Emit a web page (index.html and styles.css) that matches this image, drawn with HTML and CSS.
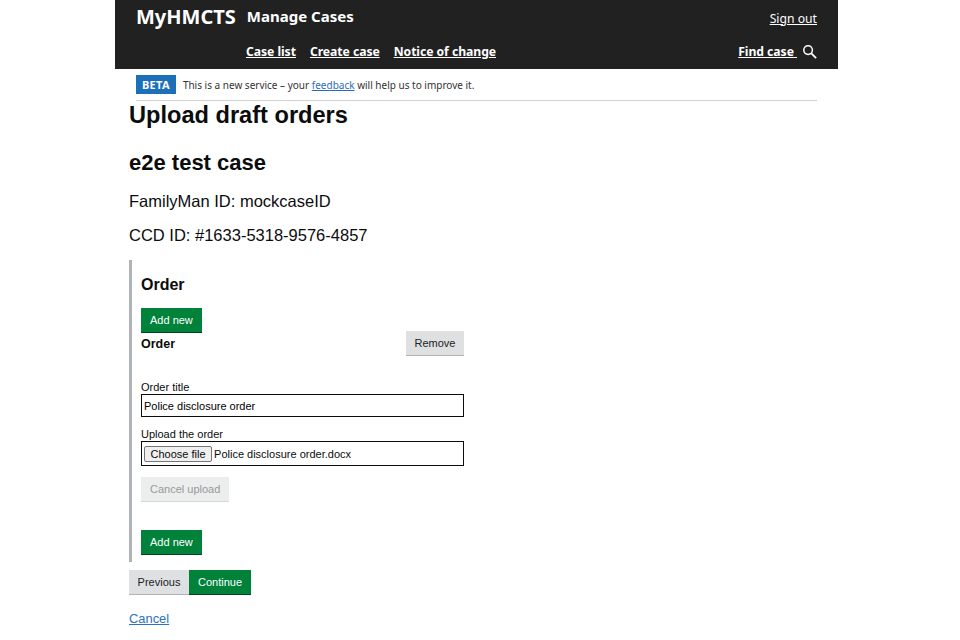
FILE: index.html
```html
<!DOCTYPE html>
<html lang="en">
<head>
  <meta charset="UTF-8" />
  <title>Upload draft orders</title>
  <link rel="stylesheet" href="styles.css">
</head>
<body>
  <div class="page">
    <header class="site-header">
      <div class="header-row">
        <div class="brand">
          <a class="logo">MyHMCTS</a>
          <span class="service-name">Manage Cases</span>
        </div>
        <a class="header-link" href="#">Sign out</a>
      </div>
      <div class="header-row nav-row">
        <nav class="main-nav">
          <a class="header-link" href="#">Case list</a>
          <a class="header-link" href="#">Create case</a>
          <a class="header-link" href="#">Notice of change</a>
        </nav>
        <div class="find-case">
          <a class="header-link" href="#">Find case&nbsp;</a>
          <svg class="search-icon" width="15" height="15" viewBox="0 0 16 16" fill="none" stroke="#fff">
            <circle cx="6.5" cy="6.5" r="4.6" stroke-width="1.6" />
            <path d="M10 10l5 5" stroke-width="2" />
          </svg>
        </div>
      </div>
    </header>

    <div class="phase-banner">
      <strong class="phase-tag">BETA</strong>
      <span>This is a new service – your <a href="#">feedback</a> will help us to improve it.</span>
    </div>

    <main class="content">
      <h1>Upload draft orders</h1>
      <h2>e2e test case</h2>
      <p class="case-ref">FamilyMan ID: mockcaseID</p>
      <p class="case-ref">CCD ID: #1633-5318-9576-4857</p>

      <section class="collection">
        <h3>Order</h3>
        <button class="btn btn-green">Add new</button>
        <div class="item-head">
          <h4>Order</h4>
          <button class="btn btn-grey">Remove</button>
        </div>
        <div class="form-group">
          <label for="orderTitle">Order title</label>
          <input type="text" id="orderTitle" value="Police disclosure order" />
        </div>
        <div class="form-group">
          <label>Upload the order</label>
          <div class="file-box">
            <span class="file-btn">Choose file</span>
            <span>Police disclosure order.docx</span>
          </div>
        </div>
        <button class="btn btn-disabled" disabled>Cancel upload</button>
        <button class="btn btn-green add-bottom">Add new</button>
      </section>

      <div class="form-actions">
        <button class="btn btn-grey">Previous</button>
        <button class="btn btn-green">Continue</button>
      </div>
      <a class="cancel" href="#">Cancel</a>
    </main>
  </div>
</body>
</html>
```
FILE: styles.css
```css
* {
  box-sizing: border-box;
  margin: 0;
  padding: 0;
}

html, body {
  height: 640px;
  overflow: hidden;
}

body {
  background-color: #fff;
  color: #0b0c0c;
  font-family: "Liberation Sans", Arial, sans-serif;
}

.page {
  width: 723px;
  margin-left: 115px;
}

.site-header {
  background-color: #212121;
  height: 69px;
  padding: 0 21px;
  color: #fff;
  font-family: "Noto Sans", sans-serif;
}

.header-row {
  display: flex;
  justify-content: space-between;
  align-items: center;
  height: 36px;
}

.nav-row {
  height: 29px;
  padding-left: 110px;
  padding-top: 2px;
}

.brand {
  display: flex;
  align-items: center;
  gap: 11px;
  padding-bottom: 4px;
}

.logo {
  font-size: 20px;
  font-weight: 700;
}

.service-name {
  font-size: 15px;
  font-weight: 700;
}

.header-link {
  color: #fff;
  font-size: 12.2px;
}

.main-nav {
  display: flex;
  gap: 14px;
}

.main-nav .header-link,
.find-case .header-link {
  font-weight: 700;
  letter-spacing: -0.05px;
}

.find-case {
  display: flex;
  align-items: center;
  gap: 5px;
}

.phase-banner {
  display: flex;
  align-items: center;
  gap: 7px;
  height: 32px;
  margin: 0 21px;
  border-bottom: 1px solid #d0d0d0;
  font-family: "Noto Sans", sans-serif;
  font-size: 10px;
  color: #333;
}

.phase-banner a {
  color: #2a6ebb;
}

.phase-tag {
  background-color: #1d70b8;
  color: #fff;
  font-size: 11px;
  letter-spacing: 0.3px;
  padding: 2px 6px;
}

.content {
  padding-left: 14px;
}

h1 {
  font-size: 23.6px;
  line-height: 28px;
  margin-bottom: 21px;
}

h2 {
  font-size: 22px;
  line-height: 26px;
  margin-bottom: 15px;
}

.case-ref {
  font-size: 16.5px;
  line-height: 20px;
  margin-bottom: 14px;
}

.collection {
  width: 336px;
  height: 302px;
  margin-top: 15px;
  border-left: 3px solid #b1b4b6;
  padding: 15px 0 0 9px;
}

h3 {
  font-size: 16px;
  line-height: 20px;
  margin-bottom: 13px;
}

h4 {
  font-size: 12.5px;
  line-height: 22px;
  padding-top: 1px;
}

.btn {
  display: block;
  font-family: "Liberation Sans", Arial, sans-serif;
  font-size: 11px;
  height: 24px;
  padding: 0 9px;
  border: none;
}

.btn-green {
  background-color: #00823b;
  color: #fff;
  box-shadow: 0 1px 0 #00431e;
}

.btn-grey {
  background-color: #dee0e2;
  color: #222;
  box-shadow: 0 1px 0 #b1b4b6;
}

.btn-disabled {
  background-color: #eceded;
  color: #999;
  box-shadow: 0 1px 0 #d5d6d7;
}

.item-head {
  display: flex;
  justify-content: space-between;
  align-items: flex-start;
  width: 323px;
  height: 49px;
}

.item-head .btn {
  width: 58px;
  padding: 0;
  margin-top: -1px;
}

.form-group {
  margin-bottom: 11px;
}

label {
  display: block;
  font-size: 11px;
  line-height: 13px;
}

input[type="text"],
.file-box {
  display: block;
  width: 323px;
  height: 23px;
  border: 1px solid #0b0c0c;
  padding: 0 2px;
  font-family: "Liberation Sans", Arial, sans-serif;
  font-size: 11px;
}

.file-box {
  display: flex;
  align-items: center;
  gap: 2px;
  height: 25px;
}

.file-btn {
  background-color: #efefef;
  border: 1px solid #767676;
  border-radius: 2px;
  padding: 1px 5.5px;
}

.add-bottom {
  margin-top: 29px;
}

.form-actions {
  display: flex;
  margin-top: 8px;
}

.form-actions .btn-grey {
  width: 60px;
  padding: 0;
}

.cancel {
  display: inline-block;
  margin-top: 17px;
  font-size: 12.9px;
  color: #2b72c0;
}
```
